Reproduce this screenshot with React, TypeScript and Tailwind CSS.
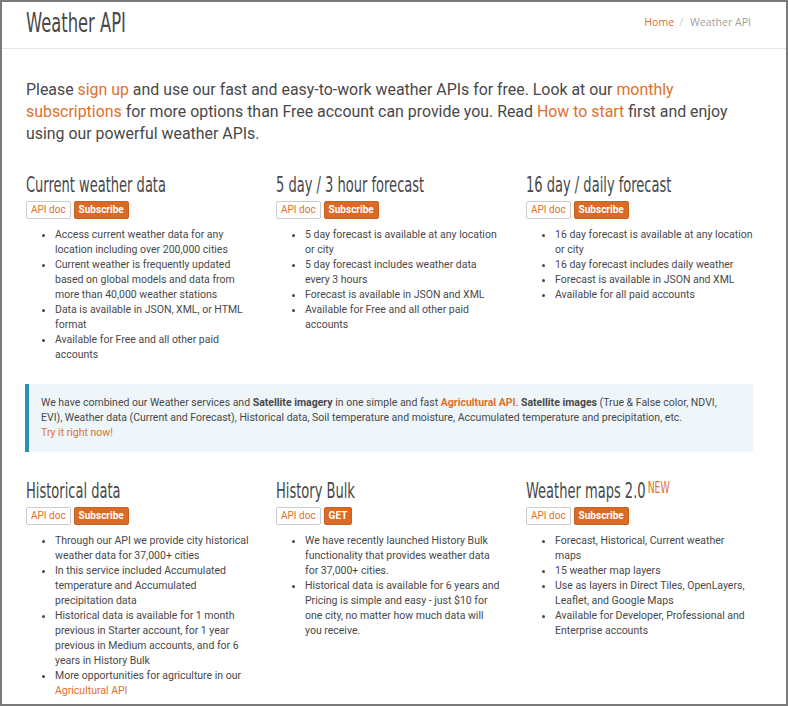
import React from "react";

const head = { fontFamily: '"DejaVu Sans Condensed", "Liberation Sans Narrow", sans-serif' };
const body = { fontFamily: 'Roboto, "Liberation Sans", sans-serif' };

interface Section {
    title: string;
    isNew?: boolean;
    action: string;
    items: React.ReactNode[];
}

const top: Section[] = [
    {
        title: "Current weather data",
        action: "Subscribe",
        items: [
            "Access current weather data for any location including over 200,000 cities",
            "Current weather is frequently updated based on global models and data from more than 40,000 weather stations",
            "Data is available in JSON, XML, or HTML format",
            "Available for Free and all other paid accounts",
        ],
    },
    {
        title: "5 day / 3 hour forecast",
        action: "Subscribe",
        items: [
            "5 day forecast is available at any location or city",
            "5 day forecast includes weather data every 3 hours",
            "Forecast is available in JSON and XML",
            "Available for Free and all other paid accounts",
        ],
    },
    {
        title: "16 day / daily forecast",
        action: "Subscribe",
        items: [
            "16 day forecast is available at any location or city",
            "16 day forecast includes daily weather",
            "Forecast is available in JSON and XML",
            "Available for all paid accounts",
        ],
    },
];

const bottom: Section[] = [
    {
        title: "Historical data",
        action: "Subscribe",
        items: [
            "Through our API we provide city historical weather data for 37,000+ cities",
            "In this service included Accumulated temperature and Accumulated precipitation data",
            "Historical data is available for 1 month previous in Starter account, for 1 year previous in Medium accounts, and for 6 years in History Bulk",
            <>
                More opportunities for agriculture in our{" "}
                <a className="text-[#e0702c]">Agricultural API</a>
            </>,
        ],
    },
    {
        title: "History Bulk",
        action: "GET",
        items: [
            "We have recently launched History Bulk functionality that provides weather data for 37,000+ cities.",
            <>
                Historical data is available for 6 years and Pricing is simple and easy - just $10 for
                one city, no matter how much data will
                <br />
                you receive.
            </>,
        ],
    },
    {
        title: "Weather maps 2.0",
        isNew: true,
        action: "Subscribe",
        items: [
            <>
                Forecast, Historical, Current weather
                <br />
                maps
            </>,
            "15 weather map layers",
            "Use as layers in Direct Tiles, OpenLayers, Leaflet, and Google Maps",
            "Available for Developer, Professional and Enterprise accounts",
        ],
    },
];

function ApiBlock({ s }: { s: Section }) {
    return (
        <div className="w-[250px] shrink-0 pr-[22.5px]">
            <h2 className="h-[24px] text-[21px] leading-[24px] text-[#48484a]" style={head}>
                <span className="inline-flex items-start w-max origin-left scale-x-[0.69]">
                    {s.title}
                    {s.isNew && (
                        <span className="text-[15px] leading-[15px] text-[#e0702c] ml-[3px] mt-[2px]">
                            NEW
                        </span>
                    )}
                </span>
            </h2>
            <div className="flex gap-[3px] mt-[4px] text-[10px] leading-[16px]" style={body}>
                <span className="border border-[#cccccc] rounded-[2px] px-[4px] text-[#e0702c] bg-white">
                    API doc
                </span>
                <span className="border border-[#c9611f] rounded-[2px] px-[4px] text-white font-bold bg-[#d96b26]">
                    {s.action}
                </span>
            </div>
            <ul
                className="list-disc pl-[29px] mt-[8px] text-[10.5px] leading-[15px] text-[#48484a] marker:text-[#48484a]"
                style={body}
            >
                {s.items.map((it, i) => (
                    <li key={i}>{it}</li>
                ))}
            </ul>
        </div>
    );
}

export default function App() {
    return (
        <div className="w-[788px] h-[706px] bg-white overflow-hidden">
            <div className="w-[788px] h-[706px] border-2 border-[#7a7a7a] overflow-hidden">
                {/* Header */}
                <div className="h-[47px] border-b border-[#e6e6e6] flex items-center justify-between pl-[24px] pr-[35px]">
                    <h1 className="text-[26px] leading-[30px] text-[#48484a] -mt-[4px]" style={head}>
                        <span className="inline-block w-max origin-left scale-x-[0.7]">Weather API</span>
                    </h1>
                    <div
                        className="text-[10.6px] text-[#a0a0a0] -mt-[4px]"
                        style={{ fontFamily: '"Open Sans", sans-serif' }}
                    >
                        <a className="text-[#e0702c]">Home</a>
                        <span className="text-[#cccccc] pl-[5px] pr-[7px]">/</span>
                        Weather API
                    </div>
                </div>

                <div className="pl-[24px]">
                    {/* Intro */}
                    <p className="mt-[30px] text-[15.9px] leading-[22px] text-[#48484a] w-[730px]" style={body}>
                        Please <a className="text-[#e0702c]">sign up</a> and use our fast and easy-to-work weather
                        APIs for free. Look at our{" "}
                        <a className="text-[#e0702c]">monthly subscriptions</a> for more options than Free
                        account can provide you. Read <a className="text-[#e0702c]">How to start</a> first and
                        enjoy using our powerful weather APIs.
                    </p>

                    {/* Top APIs */}
                    <div className="flex mt-[28px]">
                        {top.map((s) => (
                            <ApiBlock key={s.title} s={s} />
                        ))}
                    </div>

                    {/* Agro alert */}
                    <div
                        className="mt-[22px] w-[728px] -ml-[1px] border-l-[4px] border-[#2b8fb4] bg-[#eef6f9] pl-[12px] pr-[16px] pt-[11px] pb-[12px] text-[10.5px] leading-[15px] text-[#48484a]"
                        style={body}
                    >
                        We have combined our Weather services and <b>Satellite imagery</b> in one simple and
                        fast <b className="text-[#e0702c]">Agricultural API</b>. <b>Satellite images</b> (True
                        &amp; False color, NDVI, EVI), Weather data (Current and Forecast), Historical data, Soil
                        temperature and moisture, Accumulated temperature and precipitation, etc.
                        <br />
                        <a className="text-[#e0702c]">Try it right now!</a>
                    </div>

                    {/* Bottom APIs */}
                    <div className="flex mt-[27px]">
                        {bottom.map((s) => (
                            <ApiBlock key={s.title} s={s} />
                        ))}
                    </div>
                </div>
            </div>
        </div>
    );
}
